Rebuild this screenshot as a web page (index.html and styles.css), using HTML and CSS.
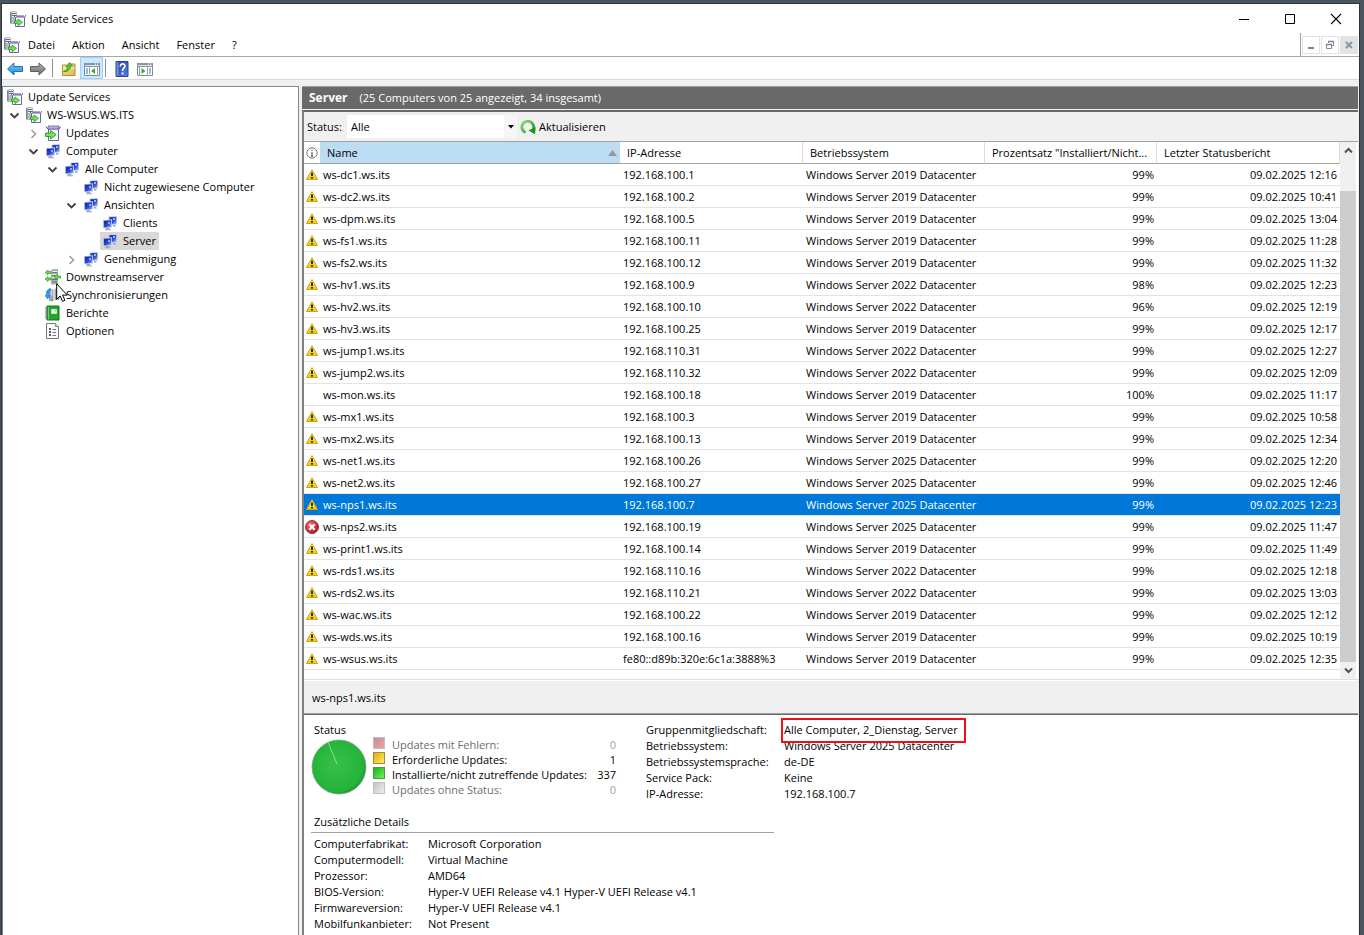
FILE: index.html
```html
<!DOCTYPE html>
<html lang="de">
<head>
<meta charset="utf-8">
<meta name="viewport" content="width=device-width, initial-scale=1">
<title>Update Services</title>
<link rel="stylesheet" href="styles.css">
</head>
<body>
<svg class="sprite" aria-hidden="true">
  <defs>
    <linearGradient id="g-blue" x1="0" y1="0" x2="0" y2="1"><stop offset="0" stop-color="#7fd0fa"/><stop offset=".5" stop-color="#3fb0f0"/><stop offset="1" stop-color="#1580cc"/></linearGradient>
    <linearGradient id="g-gray" x1="0" y1="0" x2="0" y2="1"><stop offset="0" stop-color="#b0b0b0"/><stop offset="1" stop-color="#6c6c6c"/></linearGradient>
    <linearGradient id="g-fold" x1="0" y1="0" x2="1" y2="1"><stop offset="0" stop-color="#ffe9a0"/><stop offset="1" stop-color="#dfb348"/></linearGradient>
    <linearGradient id="g-help" x1="0" y1="0" x2="1" y2="1"><stop offset="0" stop-color="#1c3fa4"/><stop offset="1" stop-color="#5b84e4"/></linearGradient>
    <linearGradient id="g-screen" x1="0" y1="0" x2="1" y2="1"><stop offset="0" stop-color="#0a1c9c"/><stop offset=".6" stop-color="#2c50dc"/><stop offset="1" stop-color="#9db8ff"/></linearGradient>
    <linearGradient id="g-warn" x1="0" y1="0" x2="0" y2="1"><stop offset="0" stop-color="#fff27a"/><stop offset="1" stop-color="#f0c400"/></linearGradient>
    <radialGradient id="g-err" cx=".35" cy=".3" r=".8"><stop offset="0" stop-color="#ee7070"/><stop offset="1" stop-color="#b01018"/></radialGradient>
    <radialGradient id="g-pie" cx=".45" cy=".45" r=".56"><stop offset="0" stop-color="#38bf4c"/><stop offset=".9" stop-color="#22b438"/><stop offset="1" stop-color="#159a2c"/></radialGradient>
    <linearGradient id="g-ref" x1="0" y1="0" x2="1" y2="1"><stop offset="0" stop-color="#8fdc7c"/><stop offset="1" stop-color="#159420"/></linearGradient>
  </defs>
  <symbol id="i-wsus" viewBox="0 0 16 16">
    <path d="M0 1.500 2 0h4l1 1v12H1L0 12z" fill="#b4bbc1"/><path d="M0 1.500 1.500 1v11.500L0 12z" fill="#7b858e"/>
    <path d="M2 1h4v1H2zM2 3h4v1H2zM2 5h4v1H2z" fill="#eef1f3"/><path d="M2 2.500h4M2 4.500h4" stroke="#5d6870"/>
    <path d="M5.500 6.500h9v9h-9z" fill="#f8f8fc" stroke="#6a64a0"/><path d="M6 5h8v2H6z" fill="#b3aed6"/><path d="M5.500 6.500 4 5M14.500 6.500 16 4M6 5h8" stroke="#55508c"/>
    <path d="M4.500 10H8V8l4.500 3.300L8 14.600V12.500H4.500z" fill="#74e44e" stroke="#1f9a22" stroke-width=".8"/>
  </symbol>
  <symbol id="i-upd" viewBox="0 0 16 16">
    <path d="M3.500 4h10v11.500h-10z" fill="#f6f6fc" stroke="#6a64a0"/><path d="M3 1h11v3H3z" fill="#b5b0da" stroke="#6a64a0" stroke-width=".8"/><path d="M3 4 .5 1.500M14 4l1.700-2.500" stroke="#5a5590"/>
    <path d="M.6 8h5V5.500l5.500 4.200-5.500 4.300v-2.500h-5z" fill="#78e450" stroke="#219c22" stroke-width=".9"/>
  </symbol>
  <symbol id="i-pc" viewBox="0 0 16 16">
    <path d="M6.500 1.500 15 1v8.500l-8.500.7z" fill="#c5cbdc"/><path d="M7.500 2.300 14.200 2v6.600l-6.700.6z" fill="url(#g-screen)"/><path d="M11 3h2v2h-2z" fill="#b9ceff" opacity=".8"/>
    <path d="m1 5 9-.7v8.500l-9 .4z" fill="#d3d8e6"/><path d="m1.800 5.800 7.400-.6v6.800l-7.400.5z" fill="url(#g-screen)"/><path d="M6 7h2v2H6z" fill="#a9c2ff" opacity=".8"/>
    <path d="M4 13h3l1 1.500H3zM11 10h2l1 1.500h-3z" fill="#9aa1a8"/><path d="M3 14.800h6" stroke="#a5abb2"/>
  </symbol>
  <symbol id="i-down" viewBox="0 0 16 16">
    <path d="M6 1.500 8 0h5v13l-1.500 2.500H6z" fill="#a8b0b4"/><path d="M7.500 2H12v1H7.500zM7.500 5H12v1H7.500zM7.500 8H12v1H7.500z" fill="#edf0f2"/><path d="M7.500 3.500H12M7.500 6.500H12M7 10.500h5M7 13h5" stroke="#68737a"/>
    <path d="m0 3.500 3-2.500v1.500h3v2H3V6zM0 10l3-2.500V9h3v2H3v1.500zM9 8l3.500-3v2H16v2h-3.500v2z" fill="#67dc3e" stroke="#2a9a22" stroke-width=".6"/><path d="M11 14h2v2h-2z" fill="#43c92c"/>
  </symbol>
  <symbol id="i-sync" viewBox="0 0 16 16">
    <path d="M4 4 5.500 2.500h3V14H4zM9.500 2.500 11 1h3.500v12h-5z" fill="#9aa4ae"/><path d="M5.500 4h2M5.500 6h2M5.500 8h2M11 3h2.500M11 5h2.500M11 7h2.500" stroke="#f0f3f5"/><path d="M6 13.500h2" stroke="#50c83a" stroke-width="1.500"/>
    <path d="M5.500 1.500C2 2 1 5 1.500 8.500H0L2.700 12l2.800-3.500H4C3.500 5.500 4 4 5.500 3.700z" fill="#2a9aea" stroke="#136bb8" stroke-width=".5"/>
  </symbol>
  <symbol id="i-book" viewBox="0 0 16 16">
    <path d="M2 1h12v14H2z" fill="#25a32d" stroke="#14761d"/><path d="M3.500 2v12.500" stroke="#6bd46a"/><path d="M6.500 4.500h5v4h-5z" fill="#fff" stroke="#bff0ba"/><path d="M9 5.500h1.500V7" fill="none" stroke="#999" stroke-width=".7"/>
    <path d="M0 3h3M0 5h3M0 7h3M0 9h3M0 11h3M0 13h3" stroke="#5d775d" stroke-width=".9"/>
  </symbol>
  <symbol id="i-opt" viewBox="0 0 16 16">
    <path d="M1.500.5h9l3 3v12h-12z" fill="#fbfbfb" stroke="#777"/><path d="M10.500.5v3h3" fill="#ddd" stroke="#888"/><path d="M4 5h2v2H4zM4 8h2v2H4zM4 11h2v2H4z" fill="#555c70"/><path d="M7.500 6.500H11M7.500 9.500H11M7.500 12.500H11" stroke="#777"/>
  </symbol>
  <symbol id="i-open" viewBox="0 0 14 14"><path d="m3.500 5.500 4 4 4-4" fill="none" stroke="#404040" stroke-width="1.800"/></symbol>
  <symbol id="i-closed" viewBox="0 0 14 14"><path d="m5.500 4 4 4-4 4" fill="none" stroke="#a0a0a0" stroke-width="1.700"/></symbol>
  <symbol id="i-warn" viewBox="0 0 12 12"><path d="M6 .6 11.500 10.500H.5z" fill="url(#g-warn)" stroke="#cda814" stroke-linejoin="round"/><path d="M6 3.500v3.500M6 8v1.500" stroke="#111" stroke-width="1.700"/></symbol>
  <symbol id="i-err" viewBox="0 0 14 14"><circle cx="7" cy="7" r="6.500" fill="url(#g-err)" stroke="#8e1018" stroke-width=".8"/><path d="m4.300 4.300 5.400 5.400M9.700 4.300 4.300 9.700" stroke="#fff" stroke-width="2.200"/></symbol>
</svg>

<div class="window">
  <header class="titlebar">
    <svg class="icon"><use href="#i-wsus"/></svg>
    <h1 class="title">Update Services</h1>
    <div class="caption">
      <button class="caption-btn" aria-label="Minimieren"><svg class="glyph" viewBox="0 0 12 12"><path d="M1 6.500h10" stroke="#000"/></svg></button>
      <button class="caption-btn" aria-label="Maximieren"><svg class="glyph" viewBox="0 0 12 12"><path d="M1.500 1.500h9v9h-9z" fill="none" stroke="#000"/></svg></button>
      <button class="caption-btn" aria-label="Schließen"><svg class="glyph" viewBox="0 0 12 12"><path d="m1 1 10 10M11 1 1 11" stroke="#000" stroke-width="1.100"/></svg></button>
    </div>
  </header>

  <nav class="menubar">
    <svg class="icon"><use href="#i-wsus"/></svg>
    <button class="menu">Datei</button>
    <button class="menu">Aktion</button>
    <button class="menu">Ansicht</button>
    <button class="menu">Fenster</button>
    <button class="menu">?</button>
    <div class="mdi">
      <button class="mdi-btn" aria-label="Fenster minimieren"><svg class="mdi-glyph" viewBox="0 0 10 10"><path d="M2 8h6" stroke="#76879a" stroke-width="2"/></svg></button>
      <button class="mdi-btn" aria-label="Fenster wiederherstellen"><svg class="mdi-glyph" viewBox="0 0 10 10"><path d="M3.500 3V1.500h5v4H7" fill="none" stroke="#76879a"/><path d="M3 1.500h6" stroke="#76879a" stroke-width="1.500"/><path d="M1.500 4.500h5v4h-5z" fill="#fff" stroke="#76879a"/><path d="M1 4.500h6" stroke="#76879a" stroke-width="1.500"/></svg></button>
      <button class="mdi-btn mdi-off" aria-label="Fenster schließen"><svg class="mdi-glyph" viewBox="0 0 10 10"><path d="m2 2 6 6M8 2 2 8" stroke="#8796a6" stroke-width="2"/></svg></button>
    </div>
  </nav>

  <div class="toolbar">
    <button class="tool" aria-label="Zurück"><svg class="icon" viewBox="0 0 16 16"><path d="M.5 8 7 2v3.500h8.500v5H7V14z" fill="url(#g-blue)" stroke="#2a6fa8"/></svg></button>
    <button class="tool" aria-label="Vorwärts"><svg class="icon" viewBox="0 0 16 16"><path d="M15.500 8 9 2v3.500H.5v5H9V14z" fill="url(#g-gray)" stroke="#5c5c5c"/></svg></button>
    <span class="divider"></span>
    <button class="tool" aria-label="Nach oben"><svg class="icon" viewBox="0 0 16 16"><path d="M1.500 4h4l1 1.500 3-2.500h4.500v11.500H1.500z" fill="url(#g-fold)" stroke="#b38c3c"/><path d="M2 7h11.500" stroke="#fff0b8"/><path d="M2.500 10.500c2.500-.5 4-2.500 4-5H5L8.500 1.500 11.500 5H9.500C9.500 8.500 6.500 11.500 2.500 10.500z" fill="#52cc38" stroke="#258a1d" stroke-width=".7"/></svg></button>
    <button class="tool tool-on" aria-label="Konsolenstruktur"><svg class="icon" viewBox="0 0 16 16"><path d="M.5 2.500h15v12H.5z" fill="#fff" stroke="#828c98"/><path d="M0 2h16v4H0z" fill="#8a94a0"/><path d="M1 4.500h14" stroke="#e2e6ea"/><path d="M11 3h1M13 3h1" stroke="#fff"/><path d="M5.500 6v9M13.500 6v9" stroke="#9aa3ad"/><path d="M2 8h2M2 10h2M2 12h2" stroke="#3477c0"/><path d="M11 7v6l-4-3z" fill="#39ad2c"/></svg></button>
    <span class="divider divider-tight"></span>
    <button class="tool" aria-label="Hilfe"><svg class="icon" viewBox="0 0 16 16"><path d="M2 .5h12v15H2z" fill="url(#g-help)" stroke="#2a448e"/><path d="M2.500 1h2v14h-2z" fill="#6e90dc"/><path d="M6.300 5.500C6.300 2 11 2.200 11 5c0 2-2.500 2-2.500 5" fill="none" stroke="#fff" stroke-width="1.600"/><path d="M7.600 11.500h1.900v1.900H7.600z" fill="#fff"/></svg></button>
    <button class="tool" aria-label="Aktionsbereich"><svg class="icon" viewBox="0 0 16 16"><path d="M.5 2.500h15v12H.5z" fill="#fff" stroke="#828c98"/><path d="M0 2h16v4H0z" fill="#8a94a0"/><path d="M1 4.500h14" stroke="#e2e6ea"/><path d="M11 3h1M13 3h1" stroke="#fff"/><path d="M10.500 6v9M2.500 6v9" stroke="#9aa3ad"/><path d="M12 8h2M12 10h2M12 12h2" stroke="#3477c0"/><path d="M4.500 7v6l4-3z" fill="#39ad2c"/></svg></button>
  </div>

  <main class="work">
    <aside class="tree">
      <a class="node" href="#root"><svg class="icon"><use href="#i-wsus"/></svg><span class="label">Update Services</span></a>
      <ul class="branch branch-root">
        <li><a class="node" href="#wsus"><svg class="chev"><use href="#i-open"/></svg><svg class="icon"><use href="#i-wsus"/></svg><span class="label">WS-WSUS.WS.ITS</span></a>
          <ul class="branch">
            <li><a class="node" href="#updates"><svg class="chev"><use href="#i-closed"/></svg><svg class="icon"><use href="#i-upd"/></svg><span class="label">Updates</span></a></li>
            <li><a class="node" href="#computer"><svg class="chev"><use href="#i-open"/></svg><svg class="icon"><use href="#i-pc"/></svg><span class="label">Computer</span></a>
              <ul class="branch">
                <li><a class="node" href="#alle"><svg class="chev"><use href="#i-open"/></svg><svg class="icon"><use href="#i-pc"/></svg><span class="label">Alle Computer</span></a>
                  <ul class="branch">
                    <li><a class="node leaf" href="#nicht"><svg class="icon"><use href="#i-pc"/></svg><span class="label">Nicht zugewiesene Computer</span></a></li>
                    <li><a class="node" href="#ansichten"><svg class="chev"><use href="#i-open"/></svg><svg class="icon"><use href="#i-pc"/></svg><span class="label">Ansichten</span></a>
                      <ul class="branch">
                        <li><a class="node leaf" href="#clients"><svg class="icon"><use href="#i-pc"/></svg><span class="label">Clients</span></a></li>
                        <li><a class="node leaf selected" href="#server" aria-current="true"><svg class="icon"><use href="#i-pc"/></svg><span class="label">Server</span></a></li>
                      </ul>
                    </li>
                    <li><a class="node" href="#genehmigung"><svg class="chev"><use href="#i-closed"/></svg><svg class="icon"><use href="#i-pc"/></svg><span class="label">Genehmigung</span></a></li>
                  </ul>
                </li>
              </ul>
            </li>
            <li><a class="node leaf" href="#downstream"><svg class="icon"><use href="#i-down"/></svg><span class="label">Downstreamserver</span></a></li>
            <li><a class="node leaf" href="#sync"><svg class="icon"><use href="#i-sync"/></svg><span class="label">Synchronisierungen</span></a></li>
            <li><a class="node leaf" href="#berichte"><svg class="icon"><use href="#i-book"/></svg><span class="label">Berichte</span></a></li>
            <li><a class="node leaf" href="#optionen"><svg class="icon"><use href="#i-opt"/></svg><span class="label">Optionen</span></a></li>
          </ul>
        </li>
      </ul>
      <svg class="pointer" viewBox="0 0 12 19"><path d="M.7.8v15.500l3.500-3.300 2.300 5.300 2.400-1-2.300-5.200h4.700z" fill="#fff" stroke="#000"/></svg>
    </aside>

    <section class="content">
      <div class="banner"><h2 class="banner-title">Server</h2><span>(25 Computers von 25 angezeigt, 34 insgesamt)</span></div>
      <div class="panel">
        <div class="filter">
          <label class="filter-label" for="status">Status:</label>
          <span class="combo"><select id="status" class="combo-select"><option>Alle</option></select><span class="combo-arrow"><svg class="combo-tri" viewBox="0 0 6 4"><path d="M0 0h6L3 3.500z"/></svg></span></span>
          <button class="refresh"><svg class="icon" viewBox="0 0 16 16"><path d="M5.500 13.500A5.900 5.900 0 1 1 13.300 10" fill="none" stroke="url(#g-ref)" stroke-width="2.800"/><path d="m8.500 11.500 7.200-3.500-.7 7.300z" fill="#16981f"/></svg>Aktualisieren</button>
        </div>
        <div class="list">
          <table class="grid">
            <colgroup><col class="c-ico"><col class="c-name"><col class="c-ip"><col class="c-os"><col class="c-pct"><col class="c-date"></colgroup>
            <thead><tr>
              <th class="h-ico"><svg class="info" viewBox="0 0 12 12"><circle cx="6" cy="6" r="5.200" fill="#fff" stroke="#666" stroke-width=".9"/><path d="M6 2.500v1.300M6 5v4.500M5 9.200h2" stroke="#444"/></svg></th>
              <th class="sorted"><span class="sort">Name<svg class="sort-tri" viewBox="0 0 9 6"><path d="M4.500 0 9 6H0z" fill="#9a9a9a"/></svg></span></th>
              <th>IP-Adresse</th><th>Betriebssystem</th><th>Prozentsatz "Installiert/Nicht...</th><th>Letzter Statusbericht</th>
            </tr></thead>
            <tbody>
              <tr><td class="ico"><svg class="warn"><use href="#i-warn"/></svg></td><td>ws-dc1.ws.its</td><td>192.168.100.1</td><td>Windows Server 2019 Datacenter</td><td>99%</td><td>09.02.2025 12:16</td></tr>
              <tr><td class="ico"><svg class="warn"><use href="#i-warn"/></svg></td><td>ws-dc2.ws.its</td><td>192.168.100.2</td><td>Windows Server 2019 Datacenter</td><td>99%</td><td>09.02.2025 10:41</td></tr>
              <tr><td class="ico"><svg class="warn"><use href="#i-warn"/></svg></td><td>ws-dpm.ws.its</td><td>192.168.100.5</td><td>Windows Server 2019 Datacenter</td><td>99%</td><td>09.02.2025 13:04</td></tr>
              <tr><td class="ico"><svg class="warn"><use href="#i-warn"/></svg></td><td>ws-fs1.ws.its</td><td>192.168.100.11</td><td>Windows Server 2019 Datacenter</td><td>99%</td><td>09.02.2025 11:28</td></tr>
              <tr><td class="ico"><svg class="warn"><use href="#i-warn"/></svg></td><td>ws-fs2.ws.its</td><td>192.168.100.12</td><td>Windows Server 2019 Datacenter</td><td>99%</td><td>09.02.2025 11:32</td></tr>
              <tr><td class="ico"><svg class="warn"><use href="#i-warn"/></svg></td><td>ws-hv1.ws.its</td><td>192.168.100.9</td><td>Windows Server 2022 Datacenter</td><td>98%</td><td>09.02.2025 12:23</td></tr>
              <tr><td class="ico"><svg class="warn"><use href="#i-warn"/></svg></td><td>ws-hv2.ws.its</td><td>192.168.100.10</td><td>Windows Server 2022 Datacenter</td><td>96%</td><td>09.02.2025 12:19</td></tr>
              <tr><td class="ico"><svg class="warn"><use href="#i-warn"/></svg></td><td>ws-hv3.ws.its</td><td>192.168.100.25</td><td>Windows Server 2019 Datacenter</td><td>99%</td><td>09.02.2025 12:17</td></tr>
              <tr><td class="ico"><svg class="warn"><use href="#i-warn"/></svg></td><td>ws-jump1.ws.its</td><td>192.168.110.31</td><td>Windows Server 2022 Datacenter</td><td>99%</td><td>09.02.2025 12:27</td></tr>
              <tr><td class="ico"><svg class="warn"><use href="#i-warn"/></svg></td><td>ws-jump2.ws.its</td><td>192.168.110.32</td><td>Windows Server 2022 Datacenter</td><td>99%</td><td>09.02.2025 12:09</td></tr>
              <tr><td class="ico"></td><td>ws-mon.ws.its</td><td>192.168.100.18</td><td>Windows Server 2019 Datacenter</td><td>100%</td><td>09.02.2025 11:17</td></tr>
              <tr><td class="ico"><svg class="warn"><use href="#i-warn"/></svg></td><td>ws-mx1.ws.its</td><td>192.168.100.3</td><td>Windows Server 2019 Datacenter</td><td>99%</td><td>09.02.2025 10:58</td></tr>
              <tr><td class="ico"><svg class="warn"><use href="#i-warn"/></svg></td><td>ws-mx2.ws.its</td><td>192.168.100.13</td><td>Windows Server 2019 Datacenter</td><td>99%</td><td>09.02.2025 12:34</td></tr>
              <tr><td class="ico"><svg class="warn"><use href="#i-warn"/></svg></td><td>ws-net1.ws.its</td><td>192.168.100.26</td><td>Windows Server 2025 Datacenter</td><td>99%</td><td>09.02.2025 12:20</td></tr>
              <tr><td class="ico"><svg class="warn"><use href="#i-warn"/></svg></td><td>ws-net2.ws.its</td><td>192.168.100.27</td><td>Windows Server 2025 Datacenter</td><td>99%</td><td>09.02.2025 12:46</td></tr>
              <tr class="active"><td class="ico"><svg class="warn"><use href="#i-warn"/></svg></td><td>ws-nps1.ws.its</td><td>192.168.100.7</td><td>Windows Server 2025 Datacenter</td><td>99%</td><td>09.02.2025 12:23</td></tr>
              <tr><td class="ico"><svg class="err"><use href="#i-err"/></svg></td><td>ws-nps2.ws.its</td><td>192.168.100.19</td><td>Windows Server 2025 Datacenter</td><td>99%</td><td>09.02.2025 11:47</td></tr>
              <tr><td class="ico"><svg class="warn"><use href="#i-warn"/></svg></td><td>ws-print1.ws.its</td><td>192.168.100.14</td><td>Windows Server 2019 Datacenter</td><td>99%</td><td>09.02.2025 11:49</td></tr>
              <tr><td class="ico"><svg class="warn"><use href="#i-warn"/></svg></td><td>ws-rds1.ws.its</td><td>192.168.110.16</td><td>Windows Server 2022 Datacenter</td><td>99%</td><td>09.02.2025 12:18</td></tr>
              <tr><td class="ico"><svg class="warn"><use href="#i-warn"/></svg></td><td>ws-rds2.ws.its</td><td>192.168.110.21</td><td>Windows Server 2022 Datacenter</td><td>99%</td><td>09.02.2025 13:03</td></tr>
              <tr><td class="ico"><svg class="warn"><use href="#i-warn"/></svg></td><td>ws-wac.ws.its</td><td>192.168.100.22</td><td>Windows Server 2019 Datacenter</td><td>99%</td><td>09.02.2025 12:12</td></tr>
              <tr><td class="ico"><svg class="warn"><use href="#i-warn"/></svg></td><td>ws-wds.ws.its</td><td>192.168.100.16</td><td>Windows Server 2019 Datacenter</td><td>99%</td><td>09.02.2025 10:19</td></tr>
              <tr><td class="ico"><svg class="warn"><use href="#i-warn"/></svg></td><td>ws-wsus.ws.its</td><td>fe80::d89b:320e:6c1a:3888%3</td><td>Windows Server 2019 Datacenter</td><td>99%</td><td>09.02.2025 12:35</td></tr>
            </tbody>
          </table>
          <div class="scroll">
            <button class="scroll-btn" aria-label="Nach oben blättern"><svg class="scroll-glyph" viewBox="0 0 9 9"><path d="m1 6.500 3.500-3.500L8 6.500" fill="none" stroke="#505050" stroke-width="2"/></svg></button>
            <div class="scroll-track"><div class="scroll-thumb"></div></div>
            <button class="scroll-btn" aria-label="Nach unten blättern"><svg class="scroll-glyph" viewBox="0 0 9 9"><path d="m1 2.500 3.500 3.500L8 2.500" fill="none" stroke="#505050" stroke-width="2"/></svg></button>
          </div>
        </div>
        <h3 class="subject">ws-nps1.ws.its</h3>
        <div class="details">
          <div class="summary">
            <div class="status">
              <h4 class="heading">Status</h4>
              <div class="status-row">
                <svg class="pie" viewBox="0 0 56 56"><circle cx="28" cy="28" r="27" fill="url(#g-pie)" stroke="#7fa585" stroke-width=".8"/><path d="M26 25 17 3" stroke="#8fdc80" stroke-width="1"/></svg>
                <dl class="legend">
                  <div class="legend-row muted"><dt><span class="swatch red"></span>Updates mit Fehlern:</dt><dd>0</dd></div>
                  <div class="legend-row"><dt><span class="swatch yellow"></span>Erforderliche Updates:</dt><dd>1</dd></div>
                  <div class="legend-row"><dt><span class="swatch green"></span>Installierte/nicht zutreffende Updates:</dt><dd>337</dd></div>
                  <div class="legend-row muted"><dt><span class="swatch gray"></span>Updates ohne Status:</dt><dd>0</dd></div>
                </dl>
              </div>
            </div>
            <dl class="facts facts-group">
              <dt>Gruppenmitgliedschaft:</dt><dd class="marked"><span class="marker">Alle Computer, 2_Dienstag, Server</span></dd>
              <dt>Betriebssystem:</dt><dd>Windows Server 2025 Datacenter</dd>
              <dt>Betriebssystemsprache:</dt><dd>de-DE</dd>
              <dt>Service Pack:</dt><dd>Keine</dd>
              <dt>IP-Adresse:</dt><dd>192.168.100.7</dd>
            </dl>
          </div>
          <h4 class="heading heading-rule">Zusätzliche Details</h4>
          <dl class="facts facts-extra">
            <dt>Computerfabrikat:</dt><dd>Microsoft Corporation</dd>
            <dt>Computermodell:</dt><dd>Virtual Machine</dd>
            <dt>Prozessor:</dt><dd>AMD64</dd>
            <dt>BIOS-Version:</dt><dd>Hyper-V UEFI Release v4.1 Hyper-V UEFI Release v4.1</dd>
            <dt>Firmwareversion:</dt><dd>Hyper-V UEFI Release v4.1</dd>
            <dt>Mobilfunkanbieter:</dt><dd>Not Present</dd>
          </dl>
        </div>
      </div>
    </section>
  </main>
</div>
</body>
</html>
```

FILE: styles.css
```css
*, *::before, *::after { box-sizing: border-box; }

body {
  margin: 0;
  min-height: 100vh;
  display: flex;
  padding: 3px 4px 0 1px;
  background: #4a545d;
  color: #000;
  font: 11px/16px "Open Sans", "Noto Sans", sans-serif;
}

h1, h2, h3, h4, ul, dl, dd { margin: 0; padding: 0; font-size: inherit; font-weight: 400; }
ul { list-style: none; }
button { border: 0; padding: 0; background: none; font: inherit; color: inherit; }
a { color: inherit; text-decoration: none; }
.sprite { position: absolute; width: 0; height: 0; }
.icon { width: 16px; height: 16px; flex: none; }

.window {
  flex: 1;
  min-width: 0;
  display: flex;
  flex-direction: column;
  background: #f0f0f0;
  border: 1px solid #2b343c;
  border-bottom: 0;
}

/* Title bar */
.titlebar { display: flex; align-items: center; height: 29px; padding-left: 8px; gap: 5px; background: #fff; }
.caption { display: flex; margin-left: auto; }
.caption-btn { width: 46px; height: 28px; display: grid; place-items: center; }
.glyph { width: 12px; height: 12px; }

/* Menu bar */
.menubar { display: flex; align-items: center; height: 24px; padding-left: 2px; background: #fff; border-bottom: 1px solid #a8a8a8; }
.menu { padding: 0 9px 0 8px; }
.mdi { display: flex; gap: 1px; margin-left: auto; align-self: stretch; padding: 3px 1px 2px; border-left: 1px solid #a0a0a0; }
.mdi-btn { width: 18px; height: 18px; display: grid; place-items: center; border: 1px solid #e3e3e3; }
.mdi-off { background: #e3e3e3; }
.mdi-glyph { width: 10px; height: 10px; }

/* Toolbar */
.toolbar { display: flex; align-items: center; height: 23px; padding-left: 1px; background: #fff; border-bottom: 1px solid #d9d9d9; }
.tool { width: 23px; height: 22px; padding-top: 1px; display: grid; place-items: center; }
.tool-on { background: #cce8ff; border: 1px solid #99d1ff; }
.divider { width: 1px; height: 18px; margin: 0 4px 0 3px; background: #8c8c8c; }
.divider-tight { margin: 0 4px 0 2px; }

/* Work area */
.work { flex: 1; display: flex; gap: 3px; padding: 6px 1px 0 0; }

.tree { position: relative; flex: none; width: 297px; padding: 1px 4px; background: #fff; border: 1px solid #828790; border-bottom: 0; }
.node { display: flex; align-items: center; width: max-content; height: 18px; gap: 2px; }
.branch .branch { padding-left: 19px; }
.label { padding: 0 3px; line-height: 18px; }
.chev { width: 14px; height: 14px; margin-right: 3px; }
.leaf { margin-left: 17px; padding-left: 2px; }
.selected { background: #d9d9d9; }
.pointer { position: absolute; left: 53px; top: 196px; width: 12px; height: 19px; }

.content { flex: 1; min-width: 0; display: flex; flex-direction: column; }
.banner { display: flex; align-items: center; gap: 12px; height: 23px; padding-left: 7px; background: #696969; border-top: 1px solid #a0a0a0; color: #fff; }
.banner-title { font-size: 12px; font-weight: 700; }
.panel { flex: 1; display: flex; flex-direction: column; margin-top: 1px; border-top: 2px solid #696969; border-left: 2px solid #808080; }

.filter { display: flex; align-items: center; height: 29px; padding-left: 3px; }
.filter-label { width: 40px; }
.combo { display: grid; width: 170px; height: 23px; background: #fff; }
.combo-select, .combo-arrow { grid-area: 1 / 1; }
.combo-select { appearance: none; border: 0; padding: 0 16px 0 4px; background: transparent; font: inherit; color: inherit; }
.combo-arrow { justify-self: end; width: 13px; display: grid; place-items: center; background: #f6f6f6; pointer-events: none; }
.combo-tri { width: 6px; height: 4px; }
.refresh { display: flex; align-items: center; gap: 3px; padding-left: 3px; }

/* Computer list */
.list { display: flex; padding-right: 2px; background: #fff; border-top: 1px solid #a0a0a0; border-bottom: 1px solid #dedede; }
.grid { flex: 1; min-width: 0; width: 100%; margin-bottom: 9px; table-layout: fixed; border-collapse: separate; border-spacing: 0; align-self: flex-start; }
.c-ico { width: 16px; }
.c-ip { width: 183px; }
.c-os { width: 182px; }
.c-pct { width: 172px; }
.c-date { width: 183px; }
.grid th, .grid td { height: 22px; padding: 0 3px; overflow: hidden; text-overflow: ellipsis; white-space: nowrap; text-align: left; font-weight: 400; }
.grid th { padding: 0 2px 0 7px; border-bottom: 1px solid #a0a0a0; border-right: 1px solid #dcdcdc; }
.grid td { border-bottom: 1px solid #e3e3e3; }
.grid td:nth-child(n+5) { text-align: right; }
.grid .h-ico, .grid .ico { padding: 0; }
.grid .h-ico { border-right-color: #fff; }
.grid .sorted { background: #bcdcf4; border-right-color: #bcdcf4; }
.sort { display: flex; align-items: center; justify-content: space-between; }
.sort-tri { width: 9px; height: 6px; }
.info, .warn, .err { display: block; width: 12px; height: 12px; margin: 0 auto; }
.err { width: 14px; height: 14px; }
.active td { background: #0078d7; color: #fff; }

.scroll { flex: none; width: 16px; display: flex; flex-direction: column; background: #f0f0f0; }
.scroll-btn { height: 17px; display: grid; place-items: center; }
.scroll-glyph { width: 9px; height: 9px; }
.scroll-track { flex: 1; padding-top: 32px; display: flex; }
.scroll-thumb { flex: 1; background: #cdcdcd; }

.subject { height: 34px; padding: 9px 8px 0; border-bottom: 1px solid #a0a0a0; border-top: 1px solid #fff; }

/* Details of the chosen computer */
.details { flex: 1; padding: 7px 7px 3px; background: #fff; border-top: 1px solid #696969; }
.summary { display: flex; align-items: flex-start; gap: 30px; }
.heading { padding: 0 3px; line-height: 15px; }
.status-row { display: flex; gap: 6px; }
.pie { width: 56px; height: 56px; flex: none; margin-top: 2px; }
.legend { width: 243px; }
.legend-row { display: flex; justify-content: space-between; height: 15px; line-height: 15px; white-space: nowrap; }
.legend-row dt { display: flex; align-items: flex-start; gap: 7px; }
.muted { color: #6d6d6d; }
.muted dd { color: #a0a0a0; }
.swatch { width: 12px; height: 12px; border: 1px solid #c0c0c0; }
.red { background: linear-gradient(135deg, #cc8c92, #e8a2a4); }
.yellow { background: linear-gradient(135deg, #e0a820, #fff050); border-color: #a89030; }
.green { background: linear-gradient(135deg, #18b418, #70f060); border-color: #4c9a48; }
.gray { background: linear-gradient(135deg, #c4c4c4, #ececec); }

.facts { display: grid; grid-auto-rows: 16px; justify-content: start; white-space: nowrap; }
.facts-group { grid-template-columns: 138px auto; }
.facts-extra { grid-template-columns: 114px auto; padding: 3px 3px 0; }
.marked { position: relative; }
.marker { position: absolute; left: -3px; top: -4px; padding: 2px 6px 3px 1px; background: #fff; border: 2px solid #ec1018; }
.heading-rule { width: 463px; margin-top: 12px; padding-bottom: 3px; border-bottom: 1px solid #a0a0a0; }
```
